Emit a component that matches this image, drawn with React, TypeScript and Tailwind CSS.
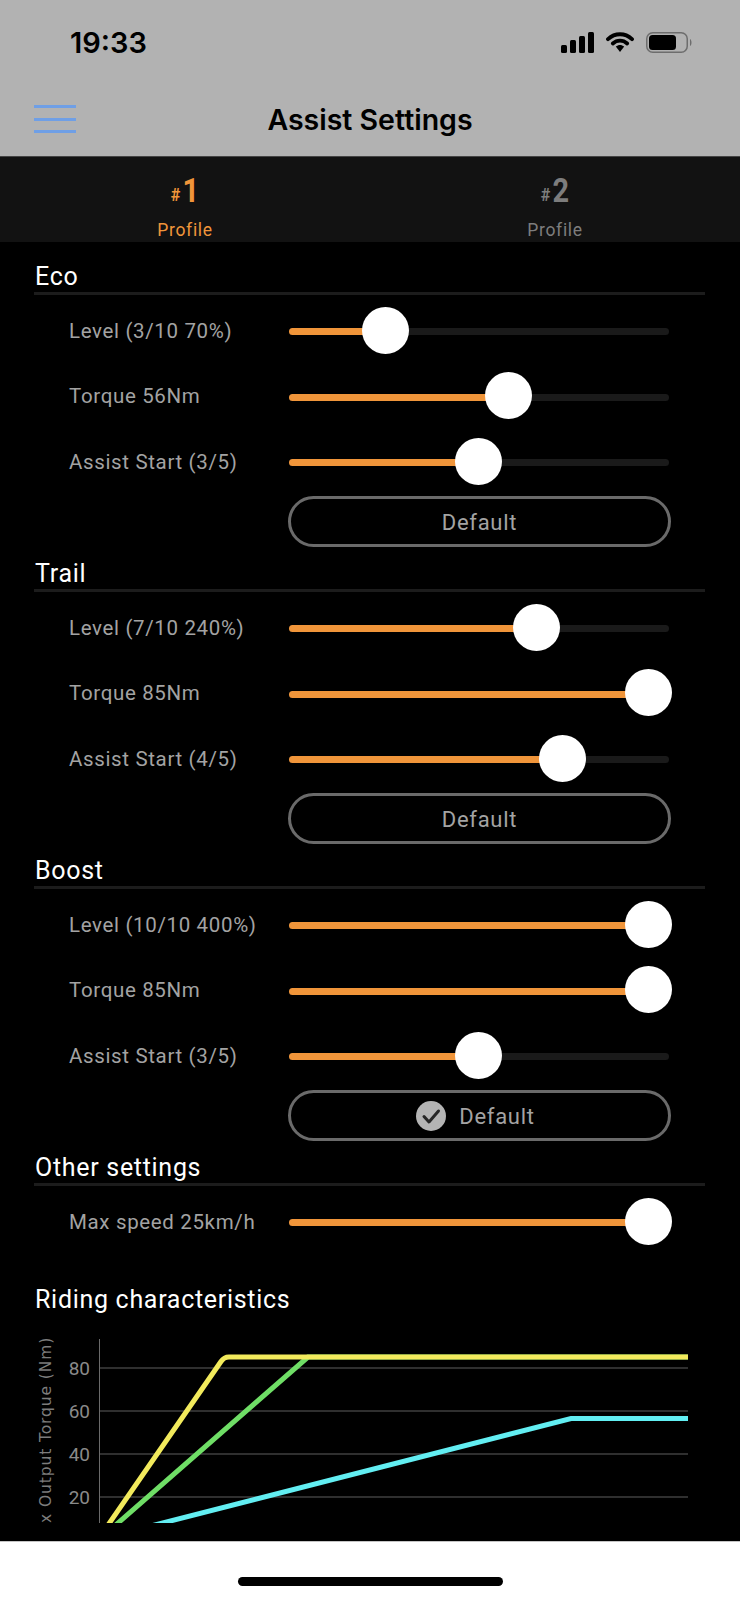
const ui = { fontFamily: 'Roboto, "Liberation Sans", sans-serif' };

function Slider({ label, center }: { label: string; center: number }) {
  return (
    <div className="flex h-[65.5px] items-center pl-[35px]">
      <div className="w-[220px] pt-[2px] text-[20.5px] leading-none tracking-[0.65px] text-[#a3a3a3]">{label}</div>
      <div className="relative mt-[3.5px] h-[7px] w-[380px] rounded-full bg-[#1a1a1a]">
        <div className="h-full rounded-full bg-[#f0953a]" style={{ width: center }} />
        <div
          className="absolute top-[-21.5px] h-[47px] w-[47px] rounded-full bg-white"
          style={{ left: center - 23.5 }}
        />
      </div>
    </div>
  );
}

function Heading({ title }: { title: string }) {
  return (
    <>
      <div className="flex h-[42px] items-center pt-[10px] pl-[1px] text-[25px] leading-none tracking-[0.7px] text-white">{title}</div>
      <div className="mr-[1px] h-[3px] bg-[#1c1c1c]" />
    </>
  );
}

function DefaultButton({ checked }: { checked?: boolean }) {
  return (
    <div
      className={`mt-[2.5px] ml-[254px] flex h-[51px] w-[383px] items-center justify-center gap-[13px] rounded-full border-[3px] border-[#6a6a6a] pt-[1px] text-[22px] tracking-[0.7px] text-[#a3a3a3] ${checked ? 'pr-[8px]' : ''}`}
    >
      {checked && (
        <svg width="30" height="30" viewBox="0 0 30 30">
          <circle cx="15" cy="15" r="15" fill="#b4b4b4" />
          <path d="M8 15.5 L13 21 L22.5 10" fill="none" stroke="#262626" strokeWidth="3" strokeLinecap="round" strokeLinejoin="round" />
        </svg>
      )}
      <span>Default</span>
    </div>
  );
}

function Section({ title, rows, checked }: { title: string; rows: [string, number][]; checked?: boolean }) {
  return (
    <section>
      <Heading title={title} />
      <div className="pt-[2px]">
        {rows.map(([l, c]) => (
          <Slider key={l} label={l} center={c} />
        ))}
      </div>
      <DefaultButton checked={checked} />
    </section>
  );
}

function Tab({ n, active }: { n: string; active?: boolean }) {
  return (
    <div className={`flex flex-1 flex-col items-center ${active ? 'text-[#f0953a]' : 'text-[#7d7d7d]'}`}>
      <div className="flex h-[50px] items-end pb-[3px] font-bold leading-none">
        <span className="inline-block scale-x-[0.85] text-[19px] leading-none">#</span>
        <span className="inline-block scale-x-[0.85] text-[34px] leading-[27px]">{n}</span>
      </div>
      <div className="mt-[15px] text-[17.5px] leading-none tracking-[0.7px]">Profile</div>
    </div>
  );
}

function Chart() {
  const grid = [
    [29, '80'],
    [72, '60'],
    [115, '40'],
    [158, '20'],
  ] as const;
  return (
    <svg width="740" height="184" viewBox="0 0 740 184" className="block" style={ui}>
      <line x1="99.5" y1="0" x2="99.5" y2="184" stroke="#6a6a6a" strokeWidth="1" />
      {grid.map(([y, t]) => (
        <g key={t}>
          <line x1="100" y1={y} x2="688" y2={y} stroke="#3f3f3f" strokeWidth="1.5" />
          <text x="90" y={y + 7} textAnchor="end" fontSize="19" fill="#8a8a8a">
            {t}
          </text>
        </g>
      ))}
      <text
        transform="translate(51 184) rotate(-90)"
        fontSize="15.5"
        letterSpacing="0.9"
        fill="#7c7c7c"
        style={{ fontFamily: '"DejaVu Sans", sans-serif' }}
      >
        x Output Torque (Nm)
      </text>
      <path d="M143 189 L571 79.5 L688 79.5" fill="none" stroke="#62eef2" strokeWidth="5" />
      <path d="M114 187.5 L308 18 L688 18" fill="none" stroke="#6fde66" strokeWidth="5" />
      <path d="M106 189 L221 22.5 Q224 18 229 18 L688 18" fill="none" stroke="#f2ea5c" strokeWidth="5" />
    </svg>
  );
}

export default function App() {
  return (
    <div className="h-[1600px] w-[740px] overflow-hidden bg-white" style={ui}>
      <header className="h-[157px] border-b border-[#444] bg-[#b2b2b2] text-black">
        <div className="flex h-[78px] items-center justify-between pt-[6px] pr-[47px] pl-[70px]">
          <span className="text-[29px] font-semibold leading-none" style={{ fontFamily: 'Inter, sans-serif' }}>
            19:33
          </span>
          <div className="flex items-center gap-[12px]">
            <svg width="33" height="21" viewBox="0 0 33 21">
              <rect x="0" y="13" width="6" height="8" rx="1.5" />
              <rect x="9" y="8" width="6" height="13" rx="1.5" />
              <rect x="18" y="4" width="6" height="17" rx="1.5" />
              <rect x="27" y="0" width="6" height="21" rx="1.5" />
            </svg>
            <svg width="28" height="20" viewBox="0 0 28 20">
              <path d="M2 7.2 C9 0.6 19 0.6 26 7.2" fill="none" stroke="#000" strokeWidth="3.8" strokeLinecap="round" />
              <path d="M6.8 11.5 C11 7.6 17 7.6 21.2 11.5" fill="none" stroke="#000" strokeWidth="3.8" strokeLinecap="round" />
              <path d="M9.8 14.6 C12.4 12.4 15.6 12.4 18.2 14.6 L14 20 Z" fill="#000" />
            </svg>
            <svg width="47" height="21" viewBox="0 0 47 21">
              <rect x="0.75" y="0.75" width="40.5" height="19.5" rx="6" fill="none" stroke="#6d6d6d" strokeWidth="1.5" />
              <rect x="3" y="3" width="27" height="15" rx="3.5" fill="#000" />
              <path d="M44 7 C46 8 46 13 44 14 Z" fill="#6d6d6d" />
            </svg>
          </div>
        </div>
        <div className="relative flex h-[78px] items-center justify-center">
          <div className="absolute top-[27px] left-[34px] flex w-[42px] flex-col gap-[9.5px]">
            <div className="h-[3px] bg-[#6f9fe6]" />
            <div className="h-[3px] bg-[#6f9fe6]" />
            <div className="h-[3px] bg-[#6f9fe6]" />
          </div>
          <span className="mt-[6px] text-[28.5px] font-semibold leading-none" style={{ fontFamily: 'Inter, sans-serif' }}>
            Assist Settings
          </span>
        </div>
      </header>

      <div className="flex h-[85px] bg-[#121212]">
        <Tab n="1" active />
        <Tab n="2" />
      </div>

      <main className="h-[1299px] overflow-hidden bg-black pt-[8px]">
        <div className="px-[34px]">
          <Section title="Eco" rows={[['Level (3/10 70%)', 96], ['Torque 56Nm', 219], ['Assist Start (3/5)', 189.5]]} />
          <Section title="Trail" rows={[['Level (7/10 240%)', 247], ['Torque 85Nm', 359], ['Assist Start (4/5)', 273.5]]} />
          <Section title="Boost" rows={[['Level (10/10 400%)', 359], ['Torque 85Nm', 359], ['Assist Start (3/5)', 189.5]]} checked />
          <section>
            <Heading title="Other settings" />
            <div className="pt-[2px]">
              <Slider label="Max speed 25km/h" center={359} />
            </div>
          </section>
          <div className="mt-[33px] pl-[1px] text-[25px] leading-none tracking-[0.7px] text-white">Riding characteristics</div>
        </div>
        <div className="mt-[27px]">
          <Chart />
        </div>
      </main>

      <footer className="flex h-[59px] justify-center border-t border-[#c4c4c4] bg-white pt-[35px]">
        <div className="h-[9px] w-[265px] rounded-full bg-black" />
      </footer>
    </div>
  );
}
